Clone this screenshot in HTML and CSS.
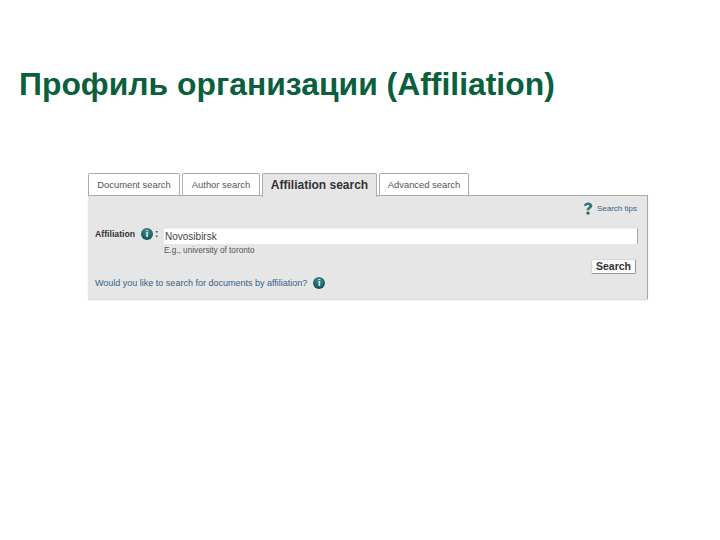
FILE: index.html
```html
<!DOCTYPE html>
<html lang="ru">
<head>
<meta charset="utf-8">
<title>Профиль организации</title>
<link rel="stylesheet" href="styles.css">
</head>
<body>
<h1 class="title">Профиль организации (Affiliation)</h1>
<section class="search">
  <nav class="tabs">
    <span class="tab tab-doc">Document search</span>
    <span class="tab tab-author">Author search</span>
    <span class="tab tab-active">Affiliation search</span>
    <span class="tab tab-adv">Advanced search</span>
  </nav>
  <div class="panel">
    <div class="tips">
      <svg class="q" width="10" height="13" viewBox="0 0 10 13"><path d="M.8 3.500C1.300 1.400 3 .5 5 .5c2.500 0 4.300 1.300 4.300 3.300 0 1.500-.9 2.300-2 3-.8.5-1 .9-1 1.500H3.600c0-1.400.4-2.100 1.400-2.800.7-.5 1.100-.9 1.100-1.500 0-.7-.5-1.100-1.300-1.100-.9 0-1.400.5-1.700 1.300z" fill="#2f7a76"/><rect x="3.600" y="9.700" width="2.800" height="2.800" fill="#1f5f5c"/></svg>
      <span class="link tips-link">Search tips</span>
    </div>
    <div class="row">
      <span class="label">Affiliation</span>
      <span class="info"><i>i</i></span>
      <b class="colon">:</b>
      <span class="input">Novosibirsk</span>
    </div>
    <div class="hint">E.g., university of toronto</div>
    <div class="actions"><span class="btn">Search</span></div>
    <div class="foot">
      <span class="link foot-link">Would you like to search for documents by affiliation?</span>
      <span class="info"><i>i</i></span>
    </div>
  </div>
</section>
</body>
</html>
```

FILE: styles.css
```css
html, body { margin: 0; padding: 0; background: #fff; }
body { width: 720px; height: 540px; overflow: hidden; font-family: "Liberation Sans", Arial, sans-serif; }
.title { margin: 0 0 0 19px; padding-top: 66px; font-size: 30.5px; line-height: 36px; font-weight: 700; color: #0a5f3c; white-space: nowrap; transform: scaleX(1.045); transform-origin: left top; }
.search { width: 560px; margin: 71px 0 0 88px; }
.tabs { display: flex; height: 22px; align-items: flex-start; position: relative; z-index: 1; }
.tab { box-sizing: border-box; height: 22px; border: 1px solid #a9aeac; border-bottom: 0; background: #fff; font-size: 9.400px; line-height: 22px; color: #555; text-align: center; border-radius: 2px 2px 0 0; }
.tab-doc { width: 92px; margin-right: 2px; }
.tab-author { width: 78px; margin-right: 2px; }
.tab-active { width: 115px; height: 24px; margin-right: 2px; background: #e6e6e6; color: #333; font-size: 12px; font-weight: 700; line-height: 22px; }
.tab-adv { width: 90px; }
.panel { box-sizing: border-box; height: 104px; background: #e6e6e6; border-top: 1px solid #a9aeac; border-right: 1px solid #a6a8a7; box-shadow: 0 1px 1px #d8d8d8; padding: 0 9px 0 7px; }
.tips { display: flex; justify-content: flex-end; align-items: center; gap: 4px; height: 12px; padding-top: 6px; padding-right: 1px; }
.tips-link { font-size: 8px; }
.link { color: #33638a; }
.row { display: flex; align-items: flex-start; height: 16px; margin-top: 14px; }
.label { width: 46px; font-size: 8.700px; line-height: 12px; font-weight: 700; color: #333; }
.info { display: inline-flex; align-items: center; justify-content: center; width: 12px; height: 12px; border-radius: 50%; background: radial-gradient(circle at 50% 25%, #3f8f94, #14565c 75%); flex: none; }
.info i { font: 700 9px/12px "Liberation Sans", Arial, sans-serif; color: #fff; }
.colon { width: 6px; margin-left: 2px; font-size: 10px; line-height: 12px; color: #333; }
.input { box-sizing: border-box; flex: 1; height: 16px; margin-left: 3px; background: #fff; border-right: 1px solid #a9aeac; border-top: 1px solid #ecf0f0; font-size: 10px; line-height: 15px; padding-left: 1px; color: #444; }
.hint { font-size: 8.200px; line-height: 10px; color: #555; margin: 2px 0 0 69px; }
.actions { display: flex; justify-content: flex-end; margin-top: 3px; }
.btn { box-sizing: border-box; width: 45px; height: 15px; margin-right: 2px; background: #fbfbfb; border: 1px solid #8f9aa0; border-top-color: #d5d5d5; border-left-color: #d5d5d5; border-radius: 2px; font-size: 10.500px; font-weight: 700; line-height: 13px; text-align: center; color: #333; }
.foot { display: flex; align-items: center; gap: 6px; height: 14px; margin-top: 2px; }
.foot-link { font-size: 9px; }
```
